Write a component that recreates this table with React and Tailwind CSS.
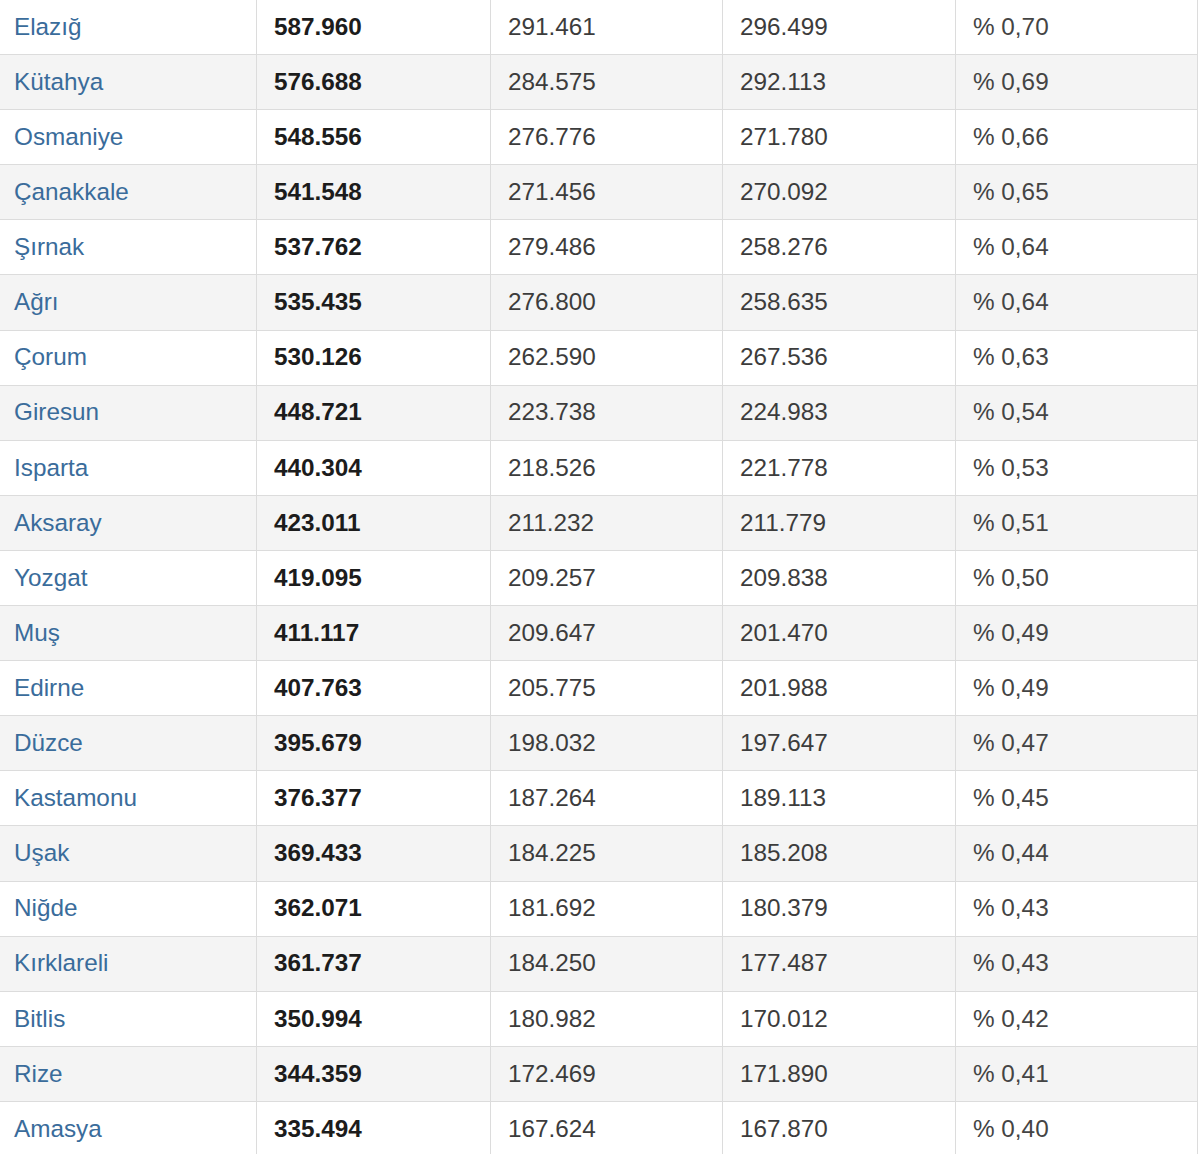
const rows = [
  ["Elazığ", "587.960", "291.461", "296.499", "% 0,70"],
  ["Kütahya", "576.688", "284.575", "292.113", "% 0,69"],
  ["Osmaniye", "548.556", "276.776", "271.780", "% 0,66"],
  ["Çanakkale", "541.548", "271.456", "270.092", "% 0,65"],
  ["Şırnak", "537.762", "279.486", "258.276", "% 0,64"],
  ["Ağrı", "535.435", "276.800", "258.635", "% 0,64"],
  ["Çorum", "530.126", "262.590", "267.536", "% 0,63"],
  ["Giresun", "448.721", "223.738", "224.983", "% 0,54"],
  ["Isparta", "440.304", "218.526", "221.778", "% 0,53"],
  ["Aksaray", "423.011", "211.232", "211.779", "% 0,51"],
  ["Yozgat", "419.095", "209.257", "209.838", "% 0,50"],
  ["Muş", "411.117", "209.647", "201.470", "% 0,49"],
  ["Edirne", "407.763", "205.775", "201.988", "% 0,49"],
  ["Düzce", "395.679", "198.032", "197.647", "% 0,47"],
  ["Kastamonu", "376.377", "187.264", "189.113", "% 0,45"],
  ["Uşak", "369.433", "184.225", "185.208", "% 0,44"],
  ["Niğde", "362.071", "181.692", "180.379", "% 0,43"],
  ["Kırklareli", "361.737", "184.250", "177.487", "% 0,43"],
  ["Bitlis", "350.994", "180.982", "170.012", "% 0,42"],
  ["Rize", "344.359", "172.469", "171.890", "% 0,41"],
  ["Amasya", "335.494", "167.624", "167.870", "% 0,40"],
];

export default function App() {
  return (
    <div
      className="w-[1200px] h-[1154px] overflow-hidden bg-white text-[24.3px]"
      style={{ fontFamily: '"Liberation Sans", Arial, sans-serif' }}
    >
      <div className="w-[1198px]">
        {rows.map((r, i) => (
          <div
            key={i}
            className={`grid grid-cols-[257px_234px_232px_233px_242px] h-[55.1px] border-b border-[#dcdcdc] ${
              i % 2 === 1 ? "bg-[#f4f4f4]" : "bg-white"
            }`}
          >
            <div className="flex items-center pl-[14px] border-r border-[#dcdcdc] text-[#3a6c9b]">
              {r[0]}
            </div>
            <div className="flex items-center pl-[17px] border-r border-[#dcdcdc] font-bold text-[#1c1c1c]">
              {r[1]}
            </div>
            <div className="flex items-center pl-[17px] border-r border-[#dcdcdc] text-[#3c3c3c]">
              {r[2]}
            </div>
            <div className="flex items-center pl-[17px] border-r border-[#dcdcdc] text-[#3c3c3c]">
              {r[3]}
            </div>
            <div className="flex items-center pl-[17px] border-r border-[#dcdcdc] text-[#444444]">
              {r[4]}
            </div>
          </div>
        ))}
      </div>
    </div>
  );
}
